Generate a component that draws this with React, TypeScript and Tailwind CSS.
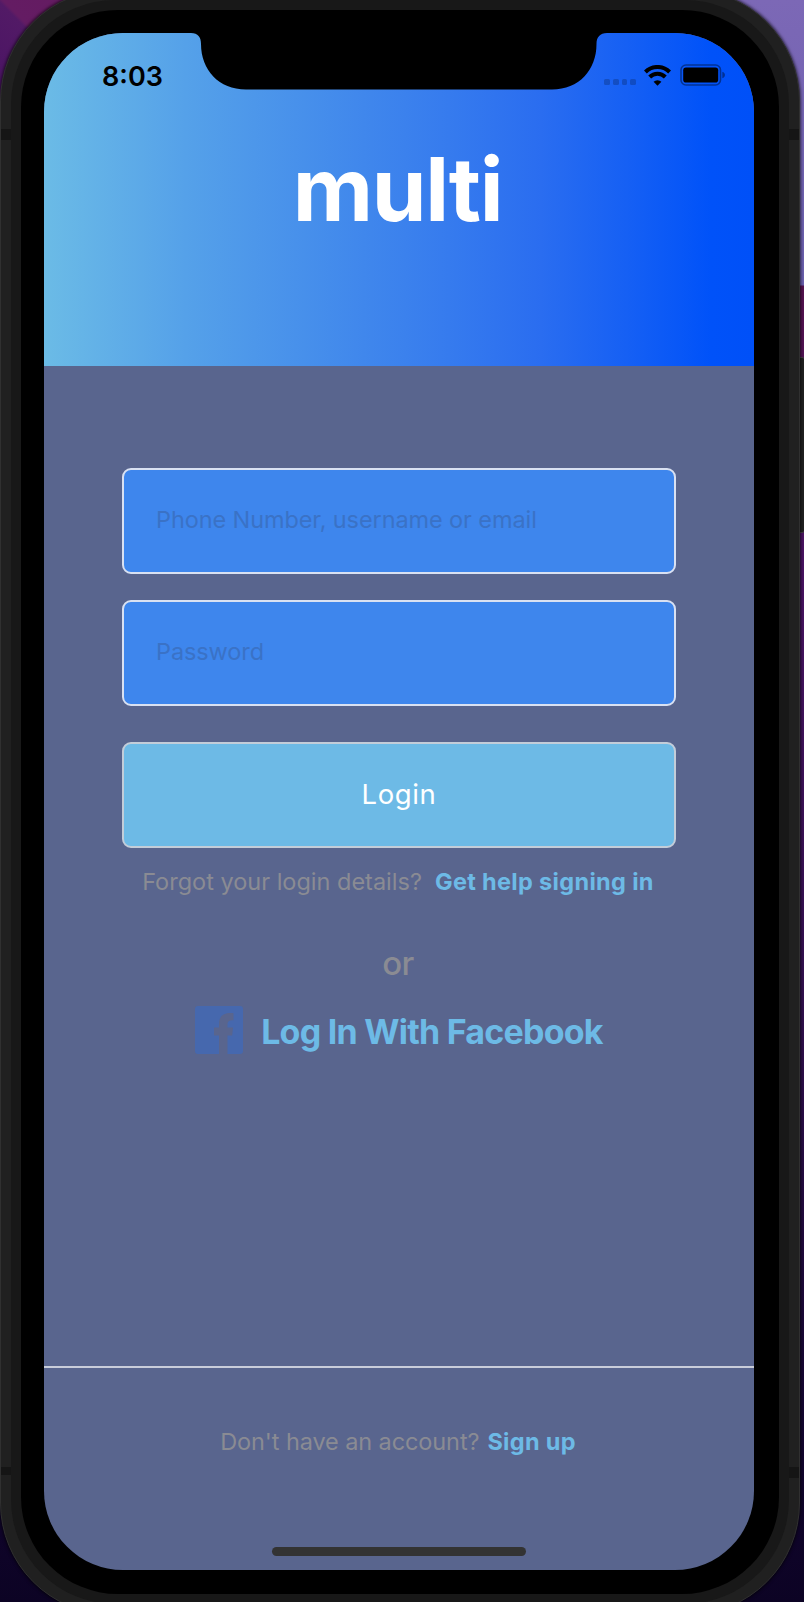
import React from "react";

function Notch() {
  return (
    <svg viewBox="0 0 416 57" className="absolute left-[147px] top-0 h-[57px] w-[416px]" aria-hidden="true">
      <path
        d="M0 0C7 0 10 4 10 11C10 37 28 56.500 55 56.500H361C388 56.500 405.500 37 405.500 11C405.500 4 409 0 416 0Z"
        fill="#000"
      />
    </svg>
  );
}

function SignalDots() {
  return (
    <div className="mt-[14px] flex gap-[3px]">
      {[0, 1, 2, 3].map((i) => (
        <span key={i} className="h-[6px] w-[5.700px] rounded-[1.500px] bg-black/20" />
      ))}
    </div>
  );
}

function WifiIcon() {
  return (
    <svg viewBox="0 0 27 21" className="h-[21px] w-[27px]" aria-hidden="true">
      <g fill="none" stroke="#000" strokeWidth="4">
        <path d="M1.400 7A17 17 0 0 1 25.600 7" />
        <path d="M5.700 12A10.800 10.800 0 0 1 21.300 12" />
      </g>
      <path d="M13.500 20.800L9.600 16.800A5.600 5.600 0 0 1 17.400 16.800Z" fill="#000" />
    </svg>
  );
}

function BatteryIcon() {
  return (
    <svg viewBox="0 0 46 22" className="h-[22px] w-[46px]" aria-hidden="true">
      <rect x="1" y="1" width="39.500" height="20" rx="5" fill="none" stroke="#000" strokeOpacity=".4" strokeWidth="1.600" />
      <rect x="3.200" y="3.400" width="35" height="15.200" rx="2.800" fill="#000" />
      <path d="M42.300 7.800C45.800 8.600 45.800 13.400 42.300 14.200Z" fill="#000" fillOpacity=".4" />
    </svg>
  );
}

function FacebookIcon() {
  return (
    <svg viewBox="0 0 48 48" className="h-[48px] w-[48px]" aria-hidden="true">
      <path
        d="M3 0H45Q48 0 48 3V45Q48 48 45 48H32.500V29.500H37.200L38 21.500H32.500V18.500C32.500 15.500 34 14.300 38.500 14.300V7.200C28.500 6.300 24 10.500 24 17.500V21.500H19V29.500H24V48H3Q0 48 0 45V3Q0 0 3 0Z"
        fill="#4668ae"
      />
    </svg>
  );
}

const field =
  "block h-[106px] w-[554px] rounded-[9px] border-2 border-[#d9e1f2] bg-[#3e86ed] px-8 pb-[3px] text-[23.500px] tracking-[-0.100px] text-black outline-none placeholder:text-[#3a72c6] placeholder:opacity-100";

export default function App() {
  return (
    <div className="relative flex h-[1602px] w-[804px] overflow-hidden bg-[linear-gradient(180deg,#7c68b6_0px,#6a5fae_285px,#55124f_286px,#4a1464_560px,#32104f_1000px,#150632_1400px,#0c0324_1602px)] font-[Inter,'Liberation_Sans',sans-serif]">
      <div className="absolute left-0 top-0 h-[120px] w-[120px] bg-[linear-gradient(45deg,#481263_0%,#521a66_49%,#641c63_51%,#641a60_100%)]" />
      <div className="absolute right-0 top-[357px] h-[176px] w-[6px] rounded-r-[2px] border-y border-[#444] bg-[#202020]" />

      <div className="relative -mt-[11px] h-[1626px] w-[800px] shrink-0 rounded-[112px] border border-[#303030] bg-[#202020] p-[10px] shadow-[0_0_3px_1px_rgba(0,0,0,0.600)]">
        <div className="absolute left-0 top-[139px] h-[11px] w-[14px] bg-[#151515]" />
        <div className="absolute right-0 top-[139px] h-[11px] w-[14px] bg-[#151515]" />
        <div className="absolute left-0 top-[1477px] h-[8px] w-[14px] bg-[#151515]" />
        <div className="absolute right-0 top-[1477px] h-[11px] w-[14px] bg-[#151515]" />

        <div className="relative h-full rounded-[104px] bg-[#181818] p-[10px]">
          <div className="h-full rounded-[97px] bg-black px-[23px] pb-[24px] pt-[23px]">
            <main className="relative flex h-[1537px] w-[710px] flex-col overflow-hidden rounded-[79px] bg-[#59658e]">
              <header className="relative h-[333px] shrink-0 bg-[linear-gradient(90deg,#6bbbe6_0%,#55a1e9_20%,#4087ec_45%,#367bee_57%,#2a6df0_70%,#1660f4_82%,#0052f9_94%,#0050f8_100%)]">
                <Notch />
                <div className="flex h-[84px] justify-between pl-[58px] pr-[28px] pt-[32px]">
                  <time className="text-[27px] font-semibold leading-[24px] text-black">8:03</time>
                  <div className="flex">
                    <SignalDots />
                    <div className="ml-[8px]"><WifiIcon /></div>
                    <div className="ml-[9px] -mt-px"><BatteryIcon /></div>
                  </div>
                </div>
                <h1 className="mt-[20px] pr-[3px] text-center text-[88px] font-bold leading-[104px] tracking-[-1.400px] text-white">multi</h1>
              </header>

              <form className="flex flex-col items-center pt-[102px]" onSubmit={(e) => e.preventDefault()}>
                <input className={field} placeholder="Phone Number, username or email" aria-label="Phone Number, username or email" />
                <input className={`${field} mt-[26px]`} type="password" placeholder="Password" aria-label="Password" />
                <button className="mt-[36px] h-[106px] w-[554px] rounded-[9px] border-2 border-[#c3cdd9] bg-[#6dbae6] text-[27.500px] tracking-[0.600px] text-white">
                  Login
                </button>
              </form>

              <p className="mt-[18px] flex justify-center gap-[13px] whitespace-nowrap pr-[2px] text-[23.500px] leading-[32px] text-[#8a8b93]">
                <span>Forgot your login details?</span>
                <a className="font-bold tracking-[0.330px] text-[#6dbae6]">Get help signing in</a>
              </p>
              <p className="mt-[45px] pr-[2px] text-center text-[33px] font-medium leading-[40px] tracking-[-0.500px] text-[#8a8b93]">or</p>
              <div className="mt-[23px] flex items-center justify-center gap-[18px]">
                <FacebookIcon />
                <a className="mt-[3px] whitespace-nowrap text-[34px] font-bold leading-[40px] tracking-[-0.760px] text-[#6dbae6]">Log In With Facebook</a>
              </div>

              <footer className="mt-auto h-[204px] border-t-2 border-[#c9cdda]">
                <p className="mt-[58px] flex justify-center gap-[8px] whitespace-nowrap pr-[2px] text-[23.500px] leading-[32px] text-[#8a8b93]">
                  <span className="tracking-[-0.100px]">Don't have an account?</span>
                  <a className="font-bold tracking-[0.300px] text-[#6dbae6]">Sign up</a>
                </p>
                <div className="mx-auto mt-[89px] h-[9px] w-[254px] rounded-full bg-[#333]" />
              </footer>
            </main>
          </div>
        </div>
      </div>
    </div>
  );
}
